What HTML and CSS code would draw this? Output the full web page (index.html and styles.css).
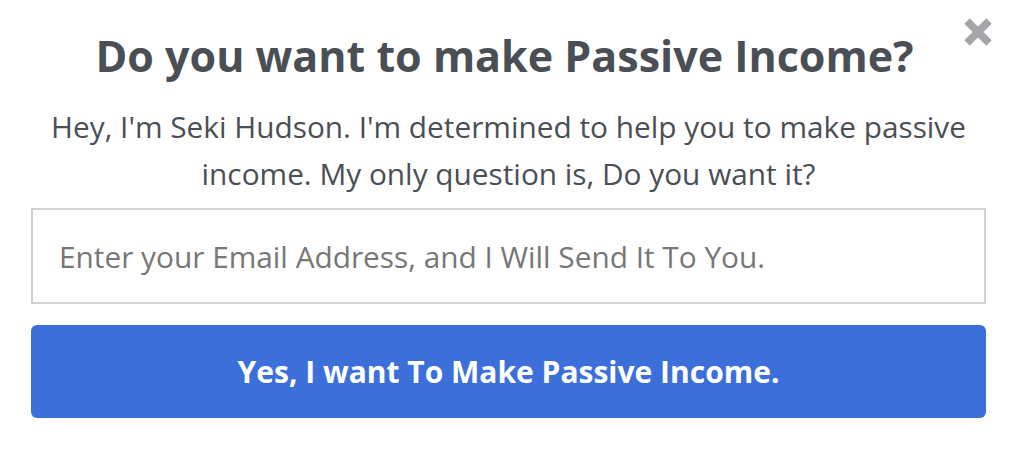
FILE: index.html
```html
<!DOCTYPE html>
<html>
<head>
<meta charset="utf-8">
<link rel="stylesheet" href="styles.css">
</head>
<body>
<div class="popup">
  <button class="close" aria-label="Close">
    <svg width="30" height="30" viewBox="0 0 30 30"><path d="M4 4 L26 26 M26 4 L4 26" stroke="#a3a5a8" stroke-width="7.5"/></svg>
  </button>
  <h1 class="title">Do you want to make Passive Income?</h1>
  <p class="lead">Hey, I'm Seki Hudson. I'm determined to help you to make passive income. My only question is, Do you want it?</p>
  <form class="form">
    <input class="email" type="email" placeholder="Enter your Email Address, and I Will Send It To You.">
    <button class="submit" type="button">Yes, I want To Make Passive Income.</button>
  </form>
</div>
</body>
</html>
```
FILE: styles.css
```css
html, body { margin: 0; padding: 0; background: #fff; }
body { font-family: "Open Sans", "Liberation Sans", sans-serif; }
.popup { position: relative; width: 1016px; height: 462px; box-sizing: border-box; padding: 30px 30px 0 31px; }
.close { position: absolute; top: 17px; right: 23px; border: 0; background: none; padding: 0; width: 30px; height: 30px; cursor: pointer; }
.close svg { display: block; }
.title { margin: 0; padding-right: 8px; text-align: center; font-size: 43px; font-weight: 700; color: #4a4f56; line-height: 52px; }
.lead { margin: 21px 0 0; text-align: center; font-size: 29.8px; line-height: 47px; color: #4a4f56; }
.form { margin-top: 11px; display: flex; flex-direction: column; gap: 21px; }
.email { box-sizing: border-box; width: 955px; height: 96px; border: 2px solid #d2d2d2; padding: 0 26px; font-family: inherit; font-size: 29.8px; color: #444; outline: none; }
.email::placeholder { color: #777; }
.submit { box-sizing: border-box; width: 955px; height: 93px; border: 0; border-radius: 6px; background: #3d6fda; color: #fff; font-family: inherit; font-size: 30px; font-weight: 700; }
```
